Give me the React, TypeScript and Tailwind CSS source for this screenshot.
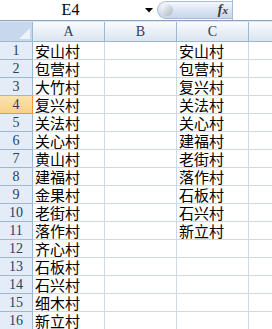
const colA = [
  "安山村", "包营村", "大竹村", "复兴村", "关法村", "关心村", "黄山村", "建福村",
  "金果村", "老街村", "落作村", "齐心村", "石板村", "石兴村", "细木村", "新立村",
];
const colC = [
  "安山村", "包营村", "复兴村", "关法村", "关心村", "建福村", "老街村", "落作村",
  "石板村", "石兴村", "新立村",
];

const cjk = { fontFamily: '"Noto Sans CJK SC", "Liberation Sans", sans-serif' };
const serif = { fontFamily: '"Liberation Serif", "DejaVu Serif", serif' };

function ColHeader({ label, last }: { label: string; last?: boolean }) {
  return (
    <div
      className={
        "flex h-full items-center justify-center bg-gradient-to-b from-[#f9fbfd] to-[#dbe4f1] text-[14px] text-[#27415f] border-b border-[#9eb6ce] " +
        (last ? "flex-1" : "w-[72px] shrink-0 border-r border-[#9eb6ce]")
      }
      style={serif}
    >
      {label}
    </div>
  );
}

function Cell({ text, last }: { text?: string; last?: boolean }) {
  return (
    <div
      className={
        "h-full border-b border-[#d0d7e5] pl-[2px] text-[15px] leading-[17px] text-black whitespace-nowrap " +
        (last ? "flex-1" : "w-[72px] shrink-0 border-r")
      }
      style={cjk}
    >
      {text}
    </div>
  );
}

export default function App() {
  return (
    <div className="h-[329px] w-[272px] overflow-hidden bg-white">
      {/* formula bar */}
      <div className="flex h-[21px] border-b border-[#8da3bd] bg-white">
        <div className="flex w-[141px] shrink-0 items-center justify-center text-[16px] text-black" style={serif}>
          E4
        </div>
        <div className="flex w-[16px] shrink-0 items-center justify-center">
          <svg width="8" height="5" viewBox="0 0 8 5">
            <path d="M0 0h8L4 4.5z" fill="#000" />
          </svg>
        </div>
        <div className="relative my-[1px] flex w-[75px] shrink-0 items-center justify-end rounded-l-full border border-r-0 border-[#a9bdd6] bg-gradient-to-b from-[#f4f8fd] via-[#dbe5f3] to-[#c8d6ea] pr-[4px]">
          <div className="absolute left-[3px] top-[2px] h-[12px] w-[12px] rounded-full bg-gradient-to-br from-white to-[#aab6c5]" />
          <span className="text-[14px] font-bold italic leading-none text-[#3a3a3a]" style={serif}>
            f<span className="text-[11px]">x</span>
          </span>
        </div>
        <div className="w-[1px] shrink-0 bg-[#a9bdd6]" />
        <div className="flex-1 bg-white" />
      </div>
      <div className="h-[1px] bg-[#dce4ee]" />

      {/* column headers */}
      <div className="flex h-[20px]">
        <div className="relative h-full w-[33px] shrink-0 border-r border-b border-[#9eb6ce] bg-[#c6d7ee]">
          <svg className="absolute bottom-[2px] right-[2px]" width="11" height="11" viewBox="0 0 11 11">
            <path d="M11 0V11H0z" fill="#eef3fa" />
          </svg>
        </div>
        <ColHeader label="A" />
        <ColHeader label="B" />
        <ColHeader label="C" />
        <ColHeader label="" last />
      </div>

      {/* rows */}
      {colA.map((a, i) => {
        const active = i === 3;
        return (
          <div key={i} className="flex h-[18px]">
            <div
              className={
                "flex h-full w-[33px] shrink-0 items-center justify-center border-r border-b text-[14px] text-[#27415f] " +
                (active
                  ? "bg-gradient-to-b from-[#fbe3ae] to-[#f8d08a] border-[#f29536]"
                  : "bg-[#e4ecf7] border-[#9eb6ce]")
              }
              style={serif}
            >
              {i + 1}
            </div>
            <Cell text={a} />
            <Cell />
            <Cell text={colC[i]} />
            <Cell last />
          </div>
        );
      })}
    </div>
  );
}
